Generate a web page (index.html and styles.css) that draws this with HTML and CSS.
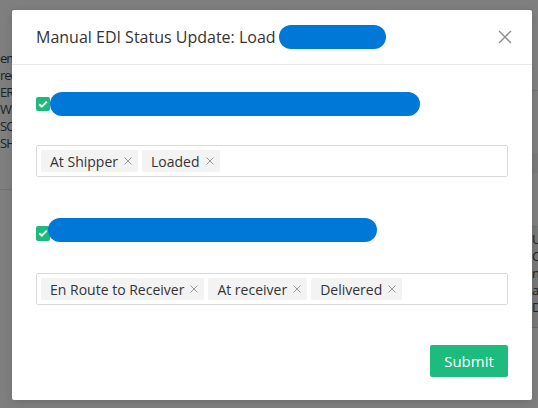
FILE: index.html
```html
<!DOCTYPE html>
<html>
<head>
<meta charset="utf-8">
<link rel="stylesheet" href="styles.css">
</head>
<body>
<div class="page">
  <div class="bg-left">
    <div class="bg-lines bg-lines--left">
      <div>em</div>
      <div>red</div>
      <div>ER</div>
      <div>WE</div>
      <div>SC</div>
      <div>SH</div>
    </div>
    <div class="bg-rule bg-rule--mid"></div>
  </div>
  <div class="bg-right">
    <div class="bg-rule bg-rule--r1"></div>
    <div class="bg-band"></div>
    <div class="bg-dark">
      <div class="bg-lines bg-lines--right">
        <div>U:</div>
        <div>Co</div>
        <div>ne</div>
        <div>a</div>
        <div>D</div>
      </div>
    </div>
  </div>
</div>
<div class="overlay"></div>
<div class="modal">
  <div class="modal-header">
    <h2 class="modal-title">Manual EDI Status Update: Load<span class="redact redact--title"></span></h2>
    <button class="close" aria-label="Close">
      <svg width="14" height="14" viewBox="0 0 14 14"><path d="M1 1L13 13M13 1L1 13" stroke="#8c8c8c" stroke-width="1.4" fill="none"/></svg>
    </button>
  </div>
  <div class="modal-body">
    <div class="check-row">
      <span class="checkbox"><svg width="14" height="14" viewBox="0 0 14 14"><path d="M3.2 7.2L5.8 9.6L10.8 4.6" stroke="#fff" stroke-width="2" fill="none"/></svg></span>
      <span class="redact redact--one"></span>
    </div>
    <div class="tag-input tag-input--first">
      <span class="tag">At Shipper<span class="tag-x"><svg width="8" height="8" viewBox="0 0 8 8"><path d="M0.5 0.5L7.5 7.5M7.5 0.5L0.5 7.5" stroke="#999" stroke-width="1" fill="none"/></svg></span></span>
      <span class="tag">Loaded<span class="tag-x"><svg width="8" height="8" viewBox="0 0 8 8"><path d="M0.5 0.5L7.5 7.5M7.5 0.5L0.5 7.5" stroke="#999" stroke-width="1" fill="none"/></svg></span></span>
    </div>
    <div class="check-row check-row--second">
      <span class="checkbox checkbox--low"><svg width="14" height="14" viewBox="0 0 14 14"><path d="M3.2 7.2L5.8 9.6L10.8 4.6" stroke="#fff" stroke-width="2" fill="none"/></svg></span>
      <span class="redact redact--two"></span>
    </div>
    <div class="tag-input tag-input--second">
      <span class="tag">En Route to Receiver<span class="tag-x"><svg width="8" height="8" viewBox="0 0 8 8"><path d="M0.5 0.5L7.5 7.5M7.5 0.5L0.5 7.5" stroke="#999" stroke-width="1" fill="none"/></svg></span></span>
      <span class="tag">At receiver<span class="tag-x"><svg width="8" height="8" viewBox="0 0 8 8"><path d="M0.5 0.5L7.5 7.5M7.5 0.5L0.5 7.5" stroke="#999" stroke-width="1" fill="none"/></svg></span></span>
      <span class="tag">Delivered<span class="tag-x"><svg width="8" height="8" viewBox="0 0 8 8"><path d="M0.5 0.5L7.5 7.5M7.5 0.5L0.5 7.5" stroke="#999" stroke-width="1" fill="none"/></svg></span></span>
    </div>
    <div class="modal-footer">
      <button class="submit">Submit</button>
    </div>
  </div>
</div>
</body>
</html>
```
FILE: styles.css
```css
html, body {
  margin: 0;
  padding: 0;
}
body {
  width: 538px;
  height: 408px;
  overflow: hidden;
  position: relative;
  background: #fff;
  font-family: "Open Sans", "Noto Sans", sans-serif;
}
.page {
  display: flex;
  justify-content: space-between;
  height: 408px;
}
.bg-left {
  width: 12px;
  overflow: hidden;
  padding-top: 50px;
}
.bg-rule {
  height: 1px;
  background: #e6e6e6;
}
.bg-lines {
  font-size: 13px;
  line-height: 17px;
  color: #444;
  white-space: nowrap;
}
.bg-lines--left {
  letter-spacing: -1px;
}
.bg-rule--mid {
  margin-top: 37px;
}
.bg-right {
  width: 6px;
  overflow: hidden;
  padding-top: 90px;
}
.bg-band {
  height: 20px;
  margin-top: 62px;
  background: #f4f4f4;
}
.bg-dark {
  margin-top: 53px;
  height: 102px;
  background: #f0f0f0;
  border-top: 1px solid #e2e2e2;
  border-bottom: 1px solid #d0d0d0;
  padding-top: 4px;
  box-sizing: border-box;
}
.overlay {
  position: absolute;
  inset: 0;
  background: rgba(0, 0, 0, 0.5);
}
.modal {
  position: absolute;
  left: 12px;
  top: 10px;
  width: 520px;
  height: 390px;
  background: #fff;
  border-radius: 2px;
  box-shadow: 0 2px 8px rgba(0, 0, 0, 0.15);
}
.modal-header {
  height: 54px;
  border-bottom: 1px solid #e9e9e9;
  display: flex;
  align-items: center;
  justify-content: space-between;
  padding: 0 19px 0 24px;
}
.modal-title {
  margin: 0;
  font-size: 16px;
  font-weight: 400;
  color: #333;
  display: flex;
  align-items: center;
}
.close {
  border: none;
  background: none;
  padding: 0;
  width: 16px;
  height: 16px;
  display: flex;
  align-items: center;
  justify-content: center;
}
.redact {
  display: inline-block;
  height: 24px;
  border-radius: 12px;
  background: #0078d7;
}
.redact--title {
  width: 107px;
  margin-left: 3px;
}
.modal-body {
  padding: 27px 24px 0;
}
.check-row {
  display: flex;
  align-items: center;
  height: 24px;
}
.checkbox {
  width: 14px;
  height: 14px;
  border-radius: 2px;
  background: #1dba7e;
  display: flex;
  flex: none;
}
.redact--one {
  width: 370px;
}
.check-row--second {
  margin-top: 40px;
  height: 25px;
}
.checkbox--low {
  align-self: flex-end;
  margin-bottom: 1px;
  height: 15px;
}
.redact--two {
  width: 329px;
  margin-left: -2px;
}
.tag-input {
  height: 32px;
  box-sizing: border-box;
  border: 1px solid #dadada;
  border-radius: 2px;
  display: flex;
  align-items: center;
  gap: 4px;
  padding: 0 4px;
}
.tag-input--first {
  margin-top: 29px;
}
.tag-input--second {
  margin-top: 31px;
}
.tag {
  height: 22px;
  display: flex;
  align-items: center;
  padding: 0 6px 0 9px;
  background: #f3f3f3;
  border-radius: 2px;
  font-size: 14px;
  color: #333;
}
.tag-x {
  display: flex;
  margin-left: 6px;
}
.modal-footer {
  margin-top: 40px;
  display: flex;
  justify-content: flex-end;
}
.submit {
  width: 78px;
  height: 32px;
  border: none;
  border-radius: 2px;
  background: #1dbb7e;
  color: #fff;
  font-family: "Open Sans", "Noto Sans", sans-serif;
  font-size: 15px;
  padding: 0;
}
```
